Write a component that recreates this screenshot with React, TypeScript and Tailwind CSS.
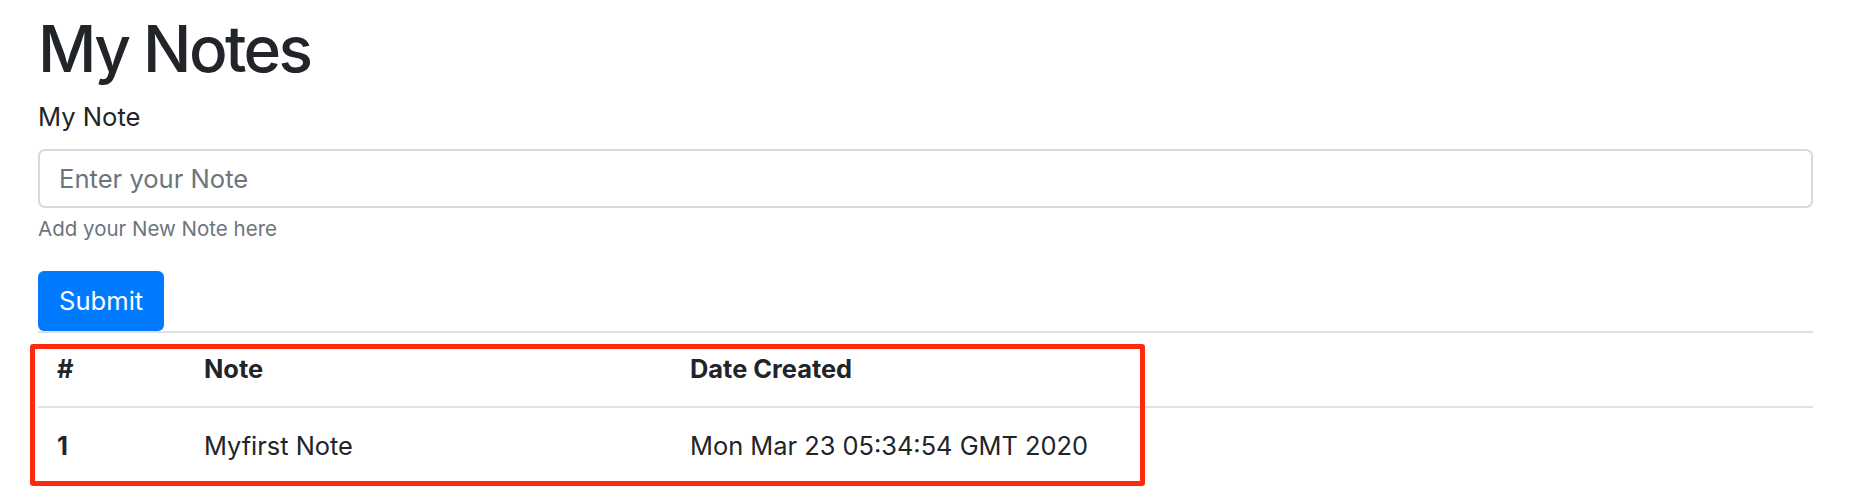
import React from "react";

export default function App() {
  return (
    <div
      className="w-[1864px] h-[496px] bg-white overflow-hidden text-[#212529]"
      style={{ fontFamily: "Inter, 'Noto Sans', sans-serif" }}
    >
      <div className="pl-[38px] pt-[11px] w-[1813px]">
        <h1 className="text-[64px] leading-[1.2] font-medium tracking-[-0.04em] mb-[10px]">My Notes</h1>
        <label className="block text-[25.6px] leading-[1.5] mb-[13px]">My Note</label>
        <input
          type="text"
          placeholder="Enter your Note"
          className="block w-full h-[59px] px-[19px] text-[25.6px] border-2 border-[#d4d9df] rounded-[7px] bg-white placeholder:text-[#6c757d] outline-none"
        />
        <small className="block mt-[6px] text-[20.5px] leading-[1.5] text-[#6c757d]">
          Add your New Note here
        </small>
        <button className="mt-[26px] h-[60px] px-[21px] bg-[#007bff] text-white text-[25.6px] leading-[1.5] rounded-[6px] flex items-center">
          Submit
        </button>
        <div className="relative">
          <table className="w-full table-fixed border-collapse text-[25.4px] leading-[1.5]">
            <colgroup>
              <col className="w-[147px]" />
              <col className="w-[486px]" />
              <col />
            </colgroup>
            <thead>
              <tr className="border-t-2 border-b-2 border-[#dee2e6]">
                <th className="text-left font-bold px-[19px] py-[17.5px]">#</th>
                <th className="text-left font-bold px-[19px] py-[17.5px]">Note</th>
                <th className="text-left font-bold px-[19px] py-[17.5px]">Date Created</th>
              </tr>
            </thead>
            <tbody>
              <tr>
                <td className="font-bold px-[19px] py-[19px]">1</td>
                <td className="px-[19px] py-[19px]">Myfirst Note</td>
                <td className="px-[19px] py-[19px]">Mon Mar 23 05:34:54 GMT 2020</td>
              </tr>
            </tbody>
          </table>
          <div className="absolute left-[-8px] top-[13px] w-[1115px] h-[142px] border-[5px] border-[#ff2a0d] rounded-[3px] pointer-events-none" />
        </div>
      </div>
    </div>
  );
}
